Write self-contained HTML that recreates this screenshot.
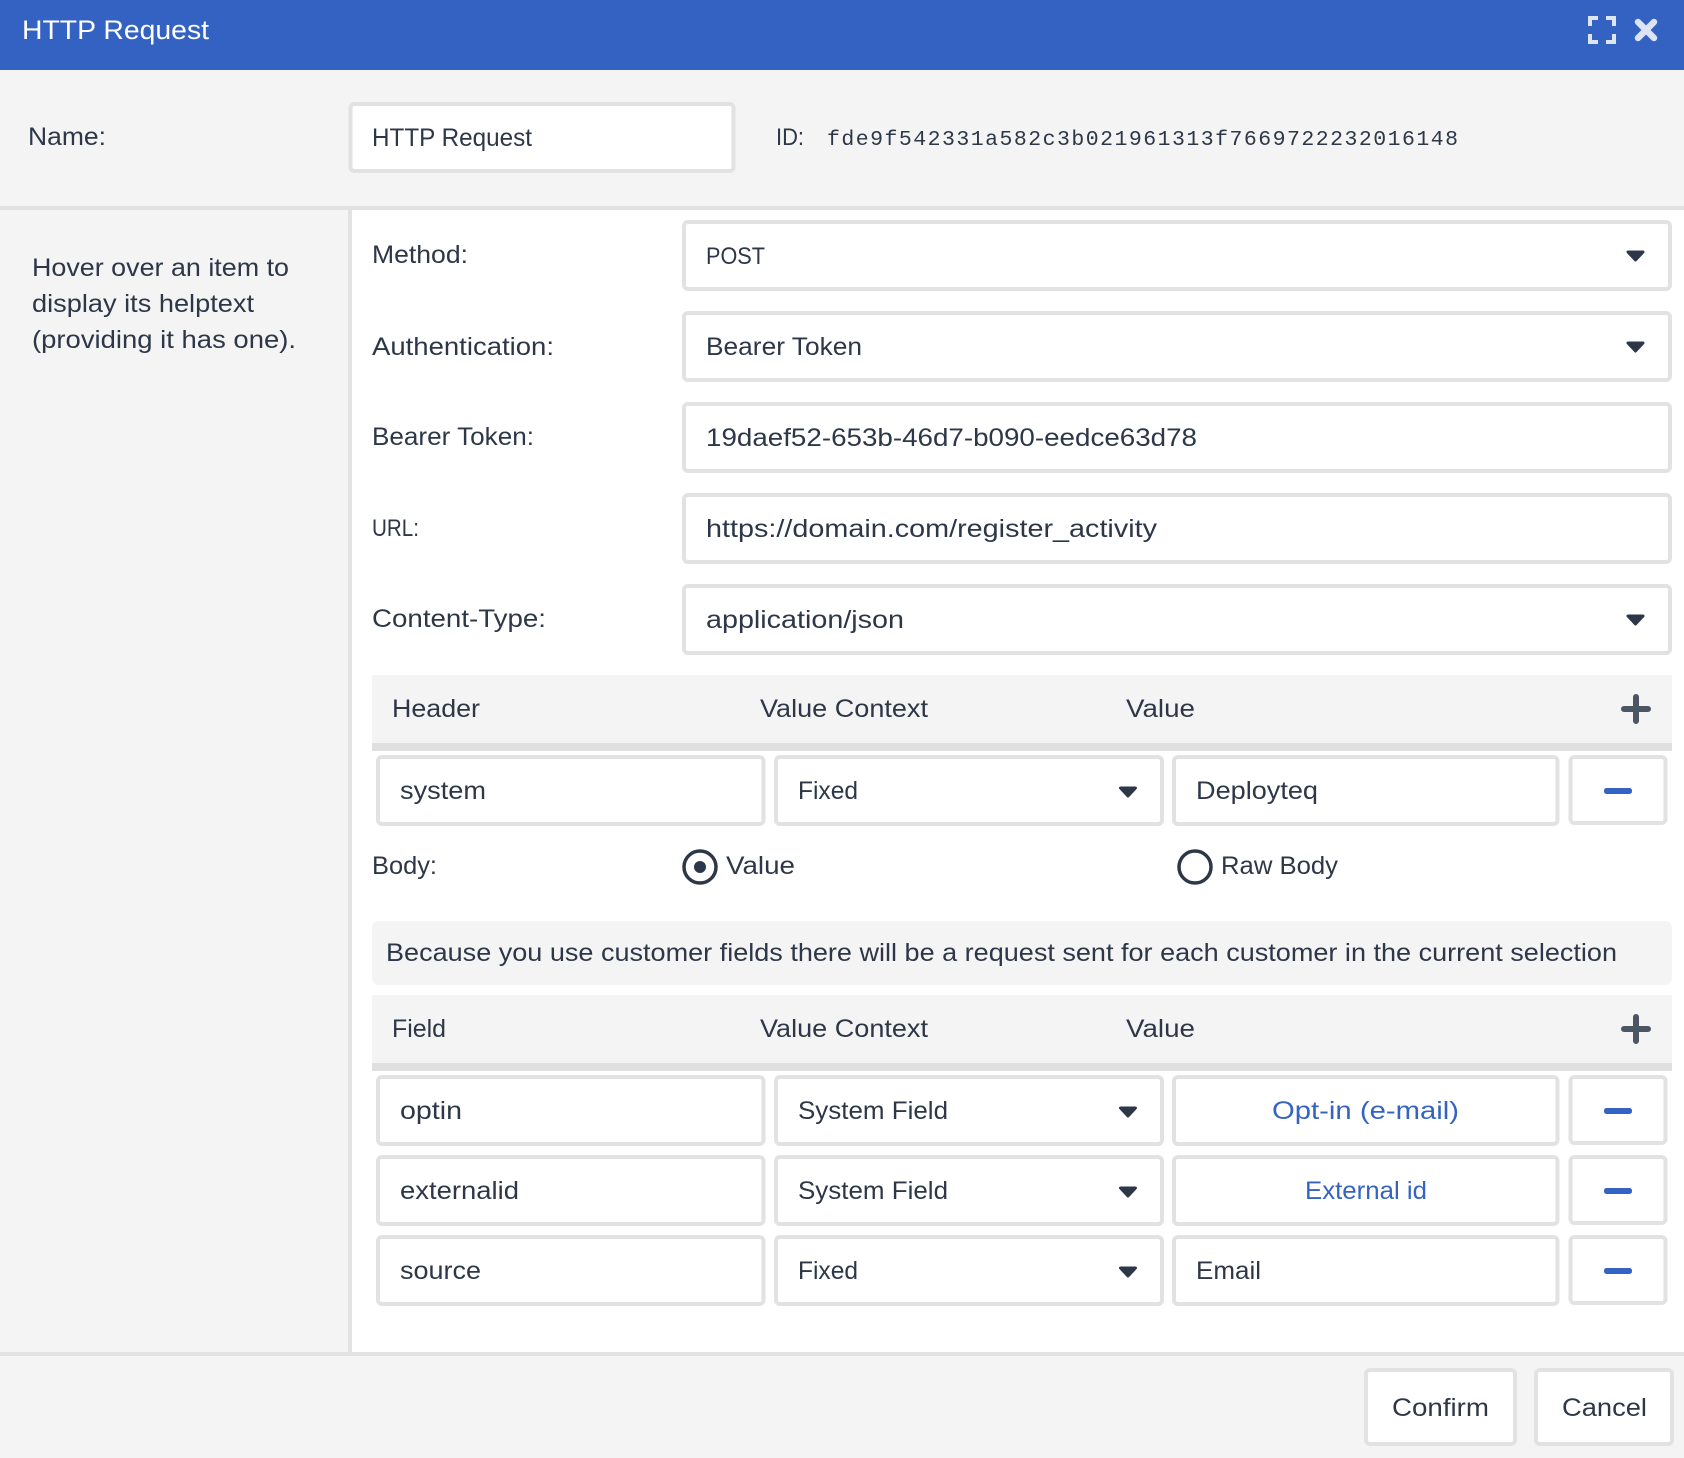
<!DOCTYPE html>
<html lang="en"><head><meta charset="utf-8"><title>HTTP Request</title>
<style>
html,body{margin:0;padding:0;background:#f4f4f4;width:1684px;height:1458px;overflow:hidden}
svg{display:block}
text{font-family:"Liberation Sans",sans-serif;font-size:25px;fill:#2d3748}
.b{fill:#fff;stroke:#e2e2e2;stroke-width:4}
.h{fill:#f4f4f4}
.l{fill:#e0e0e0}
.a{fill:#2d3748;stroke:#2d3748;stroke-width:3;stroke-linejoin:round}
.m{fill:#3563c3}
.blue{fill:#3563c3}
.s{font-size:24px}
</style></head><body>
<svg width="1684" height="1458" viewBox="0 0 1684 1458" xmlns="http://www.w3.org/2000/svg">
<rect width="1684" height="1458" fill="#f4f4f4"/>
<rect y="210" x="350" width="1334" height="1144" fill="#fff"/>
<rect width="1684" height="70" fill="#3462c2"/>
<rect y="206" width="1684" height="4" fill="#e2e2e2"/>
<rect x="348" y="206" width="4" height="1148" fill="#e2e2e2"/>
<rect y="1352" width="1684" height="4" fill="#e2e2e2"/>

<text x="22" y="39" textLength="187" lengthAdjust="spacingAndGlyphs" style="font-size:27px;fill:#fff">HTTP Request</text>
<path d="M1590 26V18H1598M1606 18H1614V26M1614 34V42H1606M1598 42H1590V34" fill="none" stroke="#dce4f5" stroke-width="4"/>
<path d="M1638 22L1654 38M1654 22L1638 38" stroke="#dce4f5" stroke-width="6.500" stroke-linecap="round" fill="none"/>

<text x="28" y="145" textLength="78" lengthAdjust="spacingAndGlyphs">Name:</text>
<rect class="b" x="350.500" y="104" width="383" height="67" rx="4"/>
<text x="372" y="146" textLength="160" lengthAdjust="spacingAndGlyphs">HTTP Request</text>
<text class="s" x="776" y="145" textLength="28" lengthAdjust="spacingAndGlyphs">ID:</text>
<text x="827" y="145" textLength="631" lengthAdjust="spacing" style="font-family:'Liberation Mono',monospace;font-size:21.500px">fde9f542331a582c3b021961313f7669722232016148</text>

<text x="32" y="276" textLength="257" lengthAdjust="spacingAndGlyphs">Hover over an item to</text>
<text x="32" y="312" textLength="222" lengthAdjust="spacingAndGlyphs">display its helptext</text>
<text x="32" y="348" textLength="264" lengthAdjust="spacingAndGlyphs">(providing it has one).</text>

<text x="372" y="263" textLength="96" lengthAdjust="spacingAndGlyphs">Method:</text>
<text x="372" y="355" textLength="182" lengthAdjust="spacingAndGlyphs">Authentication:</text>
<text x="372" y="445" textLength="162" lengthAdjust="spacingAndGlyphs">Bearer Token:</text>
<text class="s" x="372" y="536" textLength="47" lengthAdjust="spacingAndGlyphs">URL:</text>
<text x="372" y="627" textLength="174" lengthAdjust="spacingAndGlyphs">Content-Type:</text>

<rect class="b" x="684" y="222" width="986" height="67" rx="4"/>
<rect class="b" x="684" y="313" width="986" height="67" rx="4"/>
<rect class="b" x="684" y="404" width="986" height="67" rx="4"/>
<rect class="b" x="684" y="495" width="986" height="67" rx="4"/>
<rect class="b" x="684" y="586" width="986" height="67" rx="4"/>
<text class="s" x="706" y="264" textLength="59" lengthAdjust="spacingAndGlyphs">POST</text>
<text x="706" y="355" textLength="156" lengthAdjust="spacingAndGlyphs">Bearer Token</text>
<text x="706" y="446" textLength="491" lengthAdjust="spacingAndGlyphs">19daef52-653b-46d7-b090-eedce63d78</text>
<text x="706" y="537" textLength="451" lengthAdjust="spacingAndGlyphs">https://domain.com/register_activity</text>
<text x="706" y="628" textLength="198" lengthAdjust="spacingAndGlyphs">application/json</text>
<path class="a" d="M1628 252H1643L1635.500 260Z"/>
<path class="a" d="M1628 343H1643L1635.500 351Z"/>
<path class="a" d="M1628 616H1643L1635.500 624Z"/>

<rect class="h" x="372" y="675" width="1300" height="68"/>
<rect class="l" x="372" y="743" width="1300" height="8"/>
<text x="392" y="717" textLength="88" lengthAdjust="spacingAndGlyphs">Header</text>
<text x="760" y="717" textLength="168" lengthAdjust="spacingAndGlyphs">Value Context</text>
<text x="1126" y="717" textLength="69" lengthAdjust="spacingAndGlyphs">Value</text>
<path d="M1636 697V721M1624 709H1648" stroke="#4b5563" stroke-width="6" stroke-linecap="round" fill="none"/>

<rect class="b" x="378" y="757" width="385.500" height="67" rx="4"/>
<rect class="b" x="776" y="757" width="386" height="67" rx="4"/>
<rect class="b" x="1174" y="757" width="383.500" height="67" rx="4"/>
<rect class="b" x="1570.500" y="757" width="95" height="66" rx="4"/>
<text x="400" y="799" textLength="86" lengthAdjust="spacingAndGlyphs">system</text>
<text x="798" y="799" textLength="60" lengthAdjust="spacingAndGlyphs">Fixed</text>
<text x="1196" y="799" textLength="122" lengthAdjust="spacingAndGlyphs">Deployteq</text>
<path class="a" d="M1120.500 788H1135.500L1128 796Z"/>
<rect class="m" x="1604" y="788" width="28" height="6" rx="2.500"/>

<text x="372" y="874" textLength="65" lengthAdjust="spacingAndGlyphs">Body:</text>
<circle cx="700" cy="867" r="16" fill="#fff" stroke="#2d3748" stroke-width="3.500"/>
<circle cx="700" cy="867" r="6" fill="#2d3748"/>
<text x="726" y="874" textLength="69" lengthAdjust="spacingAndGlyphs">Value</text>
<circle cx="1195" cy="867" r="16" fill="#fff" stroke="#2d3748" stroke-width="3.500"/>
<text x="1221" y="874" textLength="117" lengthAdjust="spacingAndGlyphs">Raw Body</text>

<rect class="h" x="372" y="921" width="1300" height="64" rx="7"/>
<text x="386" y="961" textLength="1231" lengthAdjust="spacingAndGlyphs">Because you use customer fields there will be a request sent for each customer in the current selection</text>

<rect class="h" x="372" y="995" width="1300" height="68"/>
<rect class="l" x="372" y="1063" width="1300" height="8"/>
<text x="392" y="1037" textLength="54" lengthAdjust="spacingAndGlyphs">Field</text>
<text x="760" y="1037" textLength="168" lengthAdjust="spacingAndGlyphs">Value Context</text>
<text x="1126" y="1037" textLength="69" lengthAdjust="spacingAndGlyphs">Value</text>
<path d="M1636 1017V1041M1624 1029H1648" stroke="#4b5563" stroke-width="6" stroke-linecap="round" fill="none"/>

<rect class="b" x="378" y="1077" width="385.500" height="67" rx="4"/>
<rect class="b" x="776" y="1077" width="386" height="67" rx="4"/>
<rect class="b" x="1174" y="1077" width="383.500" height="67" rx="4"/>
<rect class="b" x="1570.500" y="1077" width="95" height="66" rx="4"/>
<text x="400" y="1119" textLength="62" lengthAdjust="spacingAndGlyphs">optin</text>
<text x="798" y="1119" textLength="150" lengthAdjust="spacingAndGlyphs">System Field</text>
<text class="blue" x="1272" y="1119" textLength="187" lengthAdjust="spacingAndGlyphs">Opt-in (e-mail)</text>
<path class="a" d="M1120.500 1108H1135.500L1128 1116Z"/>
<rect class="m" x="1604" y="1108" width="28" height="6" rx="2.500"/>

<rect class="b" x="378" y="1157" width="385.500" height="67" rx="4"/>
<rect class="b" x="776" y="1157" width="386" height="67" rx="4"/>
<rect class="b" x="1174" y="1157" width="383.500" height="67" rx="4"/>
<rect class="b" x="1570.500" y="1157" width="95" height="66" rx="4"/>
<text x="400" y="1199" textLength="119" lengthAdjust="spacingAndGlyphs">externalid</text>
<text x="798" y="1199" textLength="150" lengthAdjust="spacingAndGlyphs">System Field</text>
<text class="blue" x="1305" y="1199" textLength="122" lengthAdjust="spacingAndGlyphs">External id</text>
<path class="a" d="M1120.500 1188H1135.500L1128 1196Z"/>
<rect class="m" x="1604" y="1188" width="28" height="6" rx="2.500"/>

<rect class="b" x="378" y="1237" width="385.500" height="67" rx="4"/>
<rect class="b" x="776" y="1237" width="386" height="67" rx="4"/>
<rect class="b" x="1174" y="1237" width="383.500" height="67" rx="4"/>
<rect class="b" x="1570.500" y="1237" width="95" height="66" rx="4"/>
<text x="400" y="1279" textLength="81" lengthAdjust="spacingAndGlyphs">source</text>
<text x="798" y="1279" textLength="60" lengthAdjust="spacingAndGlyphs">Fixed</text>
<text x="1196" y="1279" textLength="65" lengthAdjust="spacingAndGlyphs">Email</text>
<path class="a" d="M1120.500 1268H1135.500L1128 1276Z"/>
<rect class="m" x="1604" y="1268" width="28" height="6" rx="2.500"/>

<rect class="b" x="1366" y="1370" width="149" height="74" rx="4"/>
<rect class="b" x="1536" y="1370" width="136" height="74" rx="4"/>
<text x="1392" y="1416" textLength="97" lengthAdjust="spacingAndGlyphs">Confirm</text>
<text x="1562" y="1416" textLength="85" lengthAdjust="spacingAndGlyphs">Cancel</text>
</svg>
</body></html>
